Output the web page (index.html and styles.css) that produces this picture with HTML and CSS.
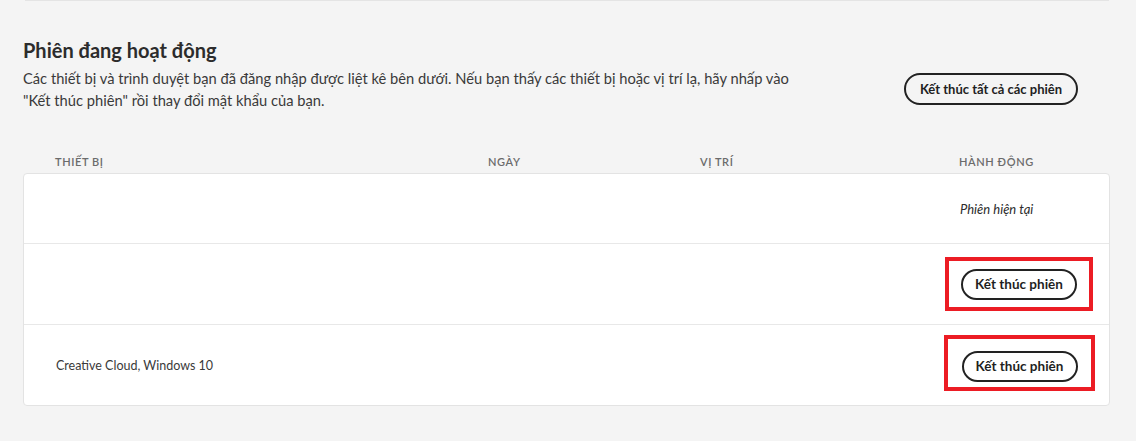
FILE: index.html
```html
<!DOCTYPE html>
<html lang="vi">
<head>
<meta charset="utf-8">
<link rel="stylesheet" href="styles.css">
</head>
<body>
<div class="topline"></div>
<section class="sessions">
  <h2 class="title">Phiên đang hoạt động</h2>
  <div class="intro">
    <p class="desc">Các thiết bị và trình duyệt bạn đã đăng nhập được liệt kê bên dưới. Nếu bạn thấy các thiết bị hoặc vị trí lạ, hãy nhấp vào "Kết thúc phiên" rồi thay đổi mật khẩu của bạn.</p>
    <button class="pill pill-all">Kết thúc tất cả các phiên</button>
  </div>
  <div class="cols thead">
    <span>Thiết bị</span>
    <span>Ngày</span>
    <span>Vị trí</span>
    <span>Hành động</span>
  </div>
  <div class="card">
    <div class="cols row row-first">
      <span></span><span></span><span></span>
      <span class="current">Phiên hiện tại</span>
    </div>
    <div class="cols row">
      <span></span><span></span><span></span>
      <span class="action"><span class="mark m1"><button class="pill">Kết thúc phiên</button></span></span>
    </div>
    <div class="cols row">
      <span class="device">Creative Cloud, Windows 10</span><span></span><span></span>
      <span class="action"><span class="mark m2"><button class="pill">Kết thúc phiên</button></span></span>
    </div>
  </div>
</section>
</body>
</html>
```
FILE: styles.css
```css
html, body {
  margin: 0;
  padding: 0;
  background: #f4f4f4;
  font-family: Lato, "Noto Sans", sans-serif;
  color: #2c2c2c;
}
.topline {
  height: 1px;
  margin: 0 27px 0 25px;
  background: #e4e4e4;
}
.sessions {
  padding: 0 26px 0 23px;
}
.title {
  margin: 36px 0 0;
  font-size: 20px;
  font-weight: 700;
  line-height: 26px;
  color: #2c2c2c;
}
.intro {
  display: flex;
  align-items: center;
  justify-content: space-between;
  margin-top: 4px;
}
.desc {
  margin: 0;
  width: 790px;
  font-size: 14.7px;
  line-height: 22px;
  color: #3a3a3a;
}
.pill {
  font-family: Lato, "Noto Sans", sans-serif;
  font-weight: 700;
  font-size: 13.5px;
  color: #1f1f1f;
  background: transparent;
  border: 2px solid #222;
  border-radius: 16px;
  height: 32px;
  padding: 0 14px;
  white-space: nowrap;
  cursor: pointer;
}
.pill-all {
  margin-right: 32px;
  width: 174px;
  padding: 0;
  font-size: 13px;
}
.cols {
  display: grid;
  grid-template-columns: 433px 212px 259px 1fr;
  padding-left: 32px;
  align-items: center;
}
.thead {
  margin-top: 40px;
  height: 20px;
  font-size: 11px;
  letter-spacing: 0.6px;
  text-transform: uppercase;
  color: #6b6b6b;
  font-weight: 600;
}
.card {
  margin-top: 2px;
  background: #fff;
  border: 1px solid #e3e3e3;
  border-radius: 4px;
}
.row {
  height: 80px;
  border-top: 1px solid #e8e8e8;
}
.row-first {
  height: 69px;
  border-top: 0;
}
.current {
  font-style: italic;
  font-size: 13px;
  color: #2c2c2c;
}
.device {
  font-size: 12.5px;
  color: #3a3a3a;
}
.action {
  display: flex;
}
.mark {
  box-sizing: border-box;
  display: inline-flex;
  justify-content: center;
  border: 4px solid #ec1c24;
}
.m1 {
  width: 148px;
  height: 54px;
  margin-left: -15px;
  align-items: center;
}
.m2 {
  width: 151px;
  height: 56px;
  margin-left: -16px;
  margin-bottom: 5px;
  align-items: flex-start;
  padding-top: 12px;
}
.mark .pill {
  width: 116px;
  padding: 0;
  height: 31px;
}
```
